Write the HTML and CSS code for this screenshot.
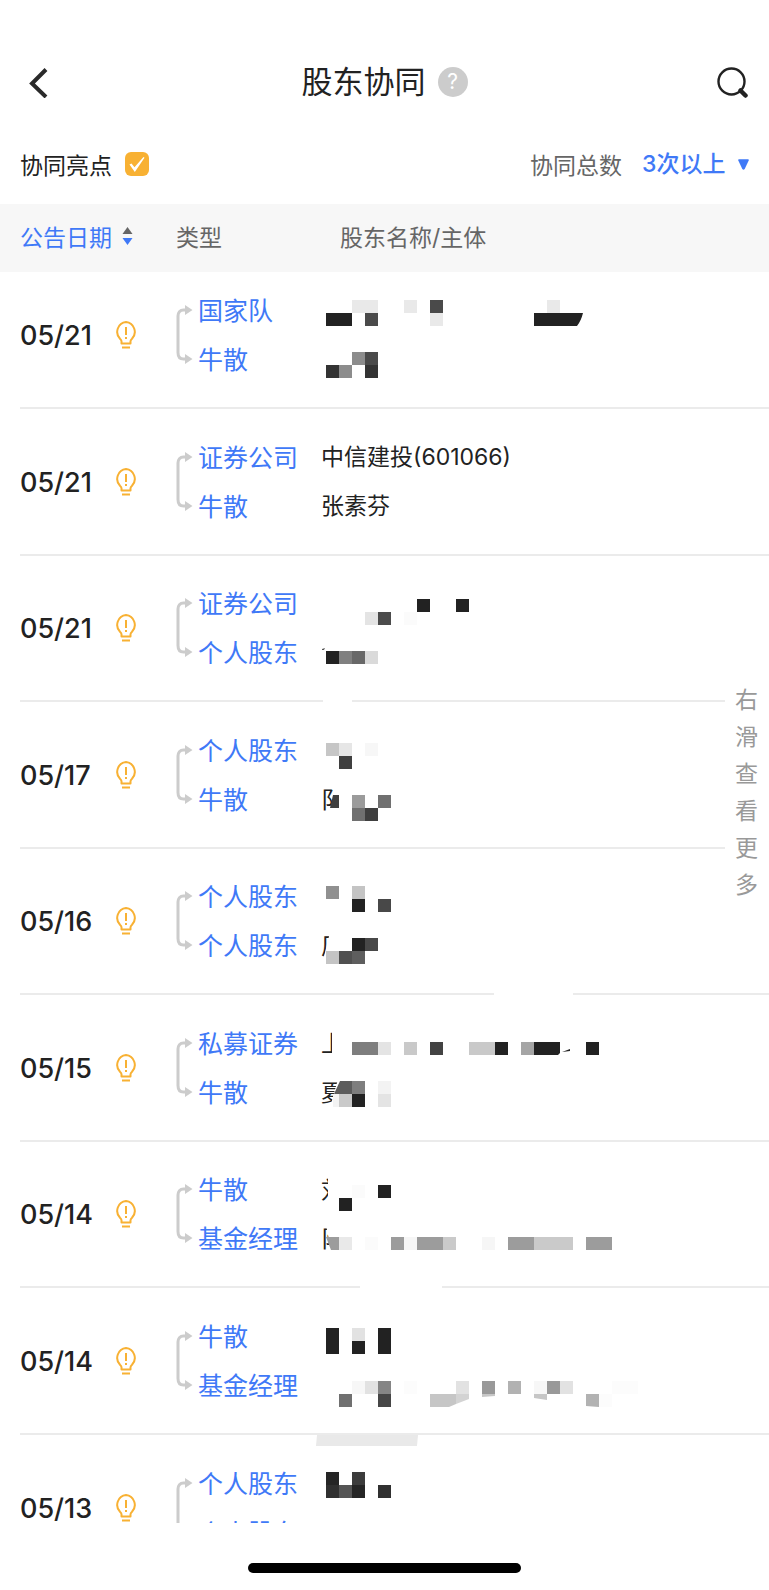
FILE: index.html
```html
<!DOCTYPE html>
<html lang="zh-CN">
<head>
<meta charset="utf-8">
<meta name="viewport" content="width=device-width, initial-scale=1">
<title>股东协同</title>
<link rel="stylesheet" href="styles.css">
</head>
<body>
<svg class="defs" width="0" height="0" aria-hidden="true">
  <symbol id="bulb" viewBox="0 0 22 28">
    <path d="M6.500 22.500v-2.200c0-1.200-.6-1.800-1.500-2.600A9.900 9.900 0 0 1 11 1a9.900 9.900 0 0 1 6 16.700c-.9.8-1.500 1.400-1.500 2.600v2.200z" fill="none" stroke="#f8b133" stroke-width="2" stroke-linejoin="round"/>
    <path d="M7 26.500h8M11 6v8M11 16v2" fill="none" stroke="#f8b133" stroke-width="2"/>
  </symbol>
  <symbol id="link" viewBox="0 0 17 60">
    <path d="M11 5H7.500C4 5 2 7.500 2 11v36.500c0 4 2 6.500 5.500 6.500H11" fill="none" stroke="#ccc" stroke-width="3"/>
    <path d="M9 0v10l7.500-5zM9 49v10l7.500-5z" fill="#ccc"/>
  </symbol>
</svg>

<header class="nav">
  <button class="icon-btn back" aria-label="返回">
    <svg width="20" height="32" viewBox="0 0 20 32"><path d="M18 3.500 4 17.500l14 13.500" fill="none" stroke="#2a2a2a" stroke-width="4"/></svg>
  </button>
  <div class="heading">
    <h1 class="title">股东协同</h1>
    <button class="help" aria-label="帮助">?</button>
  </div>
  <button class="icon-btn search" aria-label="搜索">
    <svg width="32" height="32" viewBox="0 0 32 32"><circle cx="14.500" cy="15.500" r="13" fill="none" stroke="#222" stroke-width="2.400"/><path d="m23.500 24.500 5 5" stroke="#222" stroke-width="4.500" stroke-linecap="round"/></svg>
  </button>
</header>

<section class="filters">
  <label class="highlight">协同亮点
    <span class="check">
      <input type="checkbox" class="check-input" checked>
      <svg class="check-mark" viewBox="0 0 24 24"><path d="m4.500 12.500 2-1 3 3.800L18.500 5l1 .8L9.800 20z" fill="#fff"/></svg>
    </span>
  </label>
  <div class="total">
    <label class="total-label" for="count">协同总数</label>
    <span class="picker">
      <select id="count" class="count"><option>3次以上</option></select>
      <svg width="11" height="11" viewBox="0 0 11 11"><path d="M1 .3h9q1.200 0 .7 1.200L6.700 10q-1.200 1.500-2.400 0L.3 1.500Q-.2.300 1 .3z" fill="#3f79f7"/></svg>
    </span>
  </div>
</section>

<main class="list">
<table class="table">
  <thead class="head">
    <tr class="head-row">
      <th class="th"><button class="sort">公告日期
        <svg width="11" height="20" viewBox="0 0 11 20"><path d="M.5 8 5.500 1l5 7z" fill="#666"/><path d="M.5 12h10l-5 7z" fill="#3f79f7"/></svg></button></th>
      <th class="th">类型</th>
      <th class="th th-name">股东名称/主体</th>
    </tr>
  </thead>
  <tbody class="body">
    <tr class="row">
      <td class="date">05/21<svg class="bulb"><use href="#bulb"/></svg></td>
      <td class="type"><svg class="link"><use href="#link"/></svg><span class="lines"><a href="#">国家队</a><a href="#">牛散</a></span></td>
      <td class="name"><svg class="mosaic" viewBox="0 0 320 98">
        <path fill="#e9e9e9" d="M31 14h26v13H31zM83 14h13v13H83zM109 27h13v13h-13zM226 14h13v13h-13z"/>
        <path fill="#4a4a4a" d="M109 14h13v13h-13zM44 27h13v13H44zM44 66h13v13H44z"/>
        <path fill="#222" d="M5 27h26v13H5zM213 27h49q-2 8-6 13h-43z"/>
        <path fill="#8c8c8c" d="M31 66h13v13H31zM18 79h13v13H18z"/>
        <path fill="#333" d="M5 79h13v13H5zM44 79h13v13H44z"/>
      </svg></td>
    </tr>
    <tr class="row">
      <td class="date">05/21<svg class="bulb"><use href="#bulb"/></svg></td>
      <td class="type"><svg class="link"><use href="#link"/></svg><span class="lines"><a href="#">证券公司</a><a href="#">牛散</a></span></td>
      <td class="name"><span class="lines"><span>中信建投(601066)</span><span>张素芬</span></span></td>
    </tr>
    <tr class="row">
      <td class="date">05/21<svg class="bulb"><use href="#bulb"/></svg></td>
      <td class="type"><svg class="link"><use href="#link"/></svg><span class="lines"><a href="#">证券公司</a><a href="#">个人股东</a></span></td>
      <td class="name"><svg class="mosaic" viewBox="0 0 320 98">
        <path fill="#222" d="M96 20h13v13H96zM135 20h13v13h-13zM5 72h13v13H5z"/>
        <path fill="#e4e4e4" d="M44 33h13v13H44z"/><path fill="#4b4b4b" d="M57 33h13v13H57z"/>
        <path fill="#fbfbfb" d="M83 33h13v13H83z"/>
        <path fill="#808080" d="M18 72h13v13H18z"/><path fill="#686868" d="M31 72h13v13H31z"/><path fill="#dadada" d="M44 72h13v13H44z"/>
        <path fill="#555" d="m1 70 3-1-1 2H1z"/>
        <path fill="#fff" d="M2 120h29v4H2z"/>
      </svg></td>
    </tr>
    <tr class="row">
      <td class="date">05/17<svg class="bulb"><use href="#bulb"/></svg></td>
      <td class="type"><svg class="link"><use href="#link"/></svg><span class="lines"><a href="#">个人股东</a><a href="#">牛散</a></span></td>
      <td class="name"><svg class="mosaic" viewBox="0 0 320 98">
        <text class="trace" x="0" y="82">阝</text>
        <path fill="#c6c6c6" d="M5 17h13v13H5z"/><path fill="#e6e6e6" d="M18 17h13v13H18z"/><path fill="#f7f7f7" d="M44 17h13v13H44z"/>
        <path fill="#3f3f3f" d="M18 30h13v13H18zM12 69h6v13H9zM44 82h13v13H44z"/>
        <path fill="#9b9b9b" d="M31 69h13v13H31z"/><path fill="#707070" d="M57 69h13v13H57zM31 82h13v13H31z"/>
      </svg></td>
    </tr>
    <tr class="row">
      <td class="date">05/16<svg class="bulb"><use href="#bulb"/></svg></td>
      <td class="type"><svg class="link"><use href="#link"/></svg><span class="lines"><a href="#">个人股东</a><a href="#">个人股东</a></span></td>
      <td class="name"><svg class="mosaic" viewBox="0 0 320 98">
        <text class="trace" x="0" y="82">厂</text><path fill="#fff" d="M9 60h18v25H3z"/>
        <path fill="#909090" d="M5 14h13v13H5z"/><path fill="#c4c4c4" d="M31 14h13v13H31zM5 79h13v13H5z"/>
        <path fill="#222" d="M31 27h13v13H31zM31 66h13v13H31z"/><path fill="#484848" d="M57 27h13v13H57zM44 66h13v13H44z"/>
        <path fill="#505050" d="M18 79h13v13H18z"/><path fill="#5e5e5e" d="M31 79h13v13H31z"/>
        <path fill="#fff" d="M173 120h79v4h-79z"/>
      </svg></td>
    </tr>
    <tr class="row">
      <td class="date">05/15<svg class="bulb"><use href="#bulb"/></svg></td>
      <td class="type"><svg class="link"><use href="#link"/></svg><span class="lines"><a href="#">私募证券</a><a href="#">牛散</a></span></td>
      <td class="name"><svg class="mosaic" viewBox="0 0 320 98">
        <text class="trace" x="0" y="33">上</text><path fill="#fff" d="M11 10h15v27H11z"/>
        <text class="trace" x="0" y="82">夏</text><path fill="#fff" d="M17 60h9v25H10z"/>
        <path fill="#7e7e7e" d="M31 23h26v13H31zM31 62h13v13H31z"/><path fill="#e4e4e4" d="M57 23h13v13H57zM57 75h13v13H57z"/>
        <path fill="#c9c9c9" d="M83 23h13v13H83zM148 23h26v13h-26zM18 75h13v13H18z"/><path fill="#434343" d="M109 23h13v13h-13z"/>
        <path fill="#222" d="M174 23h13v13h-13zM213 23h26v11l-2 2h-24zM265 23h13v13h-13zM31 75h13v13H31zM241 33l8-3v2l-8 1z"/>
        <path fill="#a5a5a5" d="M200 23h13v13h-13z"/><path fill="#5c5c5c" d="M19 62h12v13H13z"/>
        <path fill="#f3f3f3" d="M57 62h13v13H57zM12 75h6v13h-6z"/>
      </svg></td>
    </tr>
    <tr class="row">
      <td class="date">05/14<svg class="bulb"><use href="#bulb"/></svg></td>
      <td class="type"><svg class="link"><use href="#link"/></svg><span class="lines"><a href="#">牛散</a><a href="#">基金经理</a></span></td>
      <td class="name"><svg class="mosaic" viewBox="0 0 320 98">
        <text class="trace" x="0" y="33">刘</text><path fill="#fff" d="M7 10h19v27H7z"/>
        <text class="trace" x="0" y="82">阝</text><path fill="#fff" d="M5 60h19v25H10z"/>
        <path fill="#222" d="M57 20h13v13H57zM18 33h13v13H18z"/>
        <path fill="#9c9c9c" d="M5 72h13v13h-8zM122 72v13H96V72zM70 72h13v13H70zM187 72h26v13h-26zM265 72h26v13h-26z"/>
        <path fill="#e9e9e9" d="M18 72h13v13H18z"/><path fill="#f6f6f6" d="M83 72h13v13H83zM161 72h13v13h-13z"/>
        <path fill="#fbfbfb" d="M31 20h13v13H31zM44 72h13v13H44z"/><path fill="#cacaca" d="M122 72h13v13h-13zM213 72h39v13h-39z"/>
        <path fill="#fff" d="M39 120h82v4H39z"/>
      </svg></td>
    </tr>
    <tr class="row">
      <td class="date">05/14<svg class="bulb"><use href="#bulb"/></svg></td>
      <td class="type"><svg class="link"><use href="#link"/></svg><span class="lines"><a href="#">牛散</a><a href="#">基金经理</a></span></td>
      <td class="name"><svg class="mosaic" viewBox="0 0 320 98">
        <path fill="#222" d="M5 16h13v26H5zM57 16h13v26H57zM31 29h13v13H31z"/>
        <path fill="#e2e2e2" d="M31 16h13v13H31zM44 69h13v13H44zM135 69h13v13h-13zM239 69h13v13h-13z"/>
        <path fill="#f7f7f7" d="M31 69h13v13H31zM213 69h13v13h-13z"/><path fill="#fcfcfc" d="M83 69h13v13H83zM291 69h26v13h-26zM278 82h13v13h-13z"/>
        <path fill="#858585" d="M57 69h13v13H57z"/><path fill="#707070" d="M18 82h13v13H18z"/><path fill="#464646" d="M57 82h13v13H57z"/>
        <path fill="#999" d="M161 69h13v13h-13zM226 69h13v13h-13z"/><path fill="#b2b2b2" d="M187 69h13v13h-13zM265 82h13v13l-13-1z"/>
        <path fill="#c6c6c6" d="M109 82h26v10l-7 3h-19zM161 82h13v2l-13 1zM213 82h13v6l-13-2z"/><path fill="#d3d3d3" d="M135 82h13v5l-13 5z"/>
      </svg></td>
    </tr>
    <tr class="row">
      <td class="date">05/13<svg class="bulb"><use href="#bulb"/></svg></td>
      <td class="type"><svg class="link"><use href="#link"/></svg><span class="lines"><a href="#">个人股东</a><a href="#">个人股东</a></span></td>
      <td class="name"><svg class="mosaic" viewBox="0 0 320 98">
        <path fill="#e9e9e9" d="M-4-24H97l-1 11H-5z"/>
        <path fill="#252525" d="M5 13h13v13H5zM31 26h13v13H31z"/><path fill="#3c3c3c" d="M31 13h13v13H31z"/>
        <path fill="#303030" d="M5 26h13v13H5zM57 26h13v13H57z"/><path fill="#555" d="M18 26h13v13H18z"/>
      </svg></td>
    </tr>
  </tbody>
</table>
<aside class="hint">右滑查看更多</aside>
</main>

<footer class="home"><span class="home-bar"></span></footer>
</body>
</html>
```

FILE: styles.css
```css
* {
  box-sizing: border-box;
}

body {
  display: flex;
  flex-direction: column;
  height: 100vh;
  margin: 0;
  background: #fff;
  color: #222;
  font-family: Inter, "Noto Sans CJK SC", sans-serif;
  font-size: 23px;
}

button,
select {
  padding: 0;
  border: 0;
  background: none;
  color: inherit;
  font: inherit;
}

svg {
  display: block;
  flex: none;
}

.defs {
  position: absolute;
}

.nav {
  display: grid;
  grid-template-columns: 1fr auto 1fr;
  align-items: center;
  height: 124px;
  padding: 40px 20px 0;
}

.back {
  justify-self: start;
  padding-left: 8px;
}

.search {
  justify-self: end;
}

.heading {
  display: flex;
  align-items: center;
  gap: 12px;
}

.title {
  margin: 0;
  font-size: 31px;
  font-weight: 400;
  line-height: 40px;
}

.help {
  width: 30px;
  height: 30px;
  border-radius: 50%;
  background: #ccc;
  color: #fff;
  font-size: 21px;
  line-height: 30px;
}

.filters {
  display: flex;
  flex: none;
  align-items: center;
  justify-content: space-between;
  height: 80px;
  padding: 0 20px;
}

.highlight,
.total,
.picker,
.sort {
  display: flex;
  align-items: center;
}

.highlight {
  gap: 13px;
}

.picker {
  gap: 12px;
}

.check {
  display: grid;
}

.check-input,
.check-mark {
  grid-area: 1 / 1;
  width: 24px;
  height: 24px;
  margin: 0;
}

.check-input {
  appearance: none;
  border-radius: 6px;
  background: #f8b133;
}

.check-mark {
  z-index: 1;
  pointer-events: none;
}

.total {
  gap: 20px;
}

.total-label {
  color: #666;
}

.count {
  appearance: none;
  color: #3f79f7;
  font-weight: 500;
}

.list {
  position: relative;
  flex: 1;
  min-height: 0;
  overflow: hidden;
}

.table,
.head,
.body {
  display: block;
}

.head-row,
.row {
  display: grid;
  grid-template-columns: 156px 145px 1fr;
}

.head-row {
  align-items: center;
  height: 68px;
  padding: 0 0 5px 20px;
  background: #f7f7f7;
}

.th {
  padding: 0;
  color: #666;
  font-weight: 400;
  text-align: left;
}

.th-name {
  padding-left: 19px;
}

.sort {
  gap: 10px;
  color: #3f79f7;
}

.row {
  margin-left: 20px;
  padding: 24px 0 23px;
  border-bottom: 2px solid #ebebeb;
}

.row:nth-child(odd) {
  padding-top: 23px;
}

.row:first-child {
  padding-top: 14px;
}

.row:last-child {
  padding-top: 24px;
}

.date,
.type,
.name {
  display: flex;
  align-items: center;
  height: 98px;
  padding: 0;
}

.date {
  display: grid;
  grid-template-columns: 73px 22px;
  gap: 22px;
  font-size: 27px;
  font-weight: 500;
}

.bulb {
  width: 22px;
  height: 28px;
}

.type {
  gap: 5px;
  color: #3f79f7;
  font-size: 25px;
}

.type a {
  color: inherit;
  text-decoration: none;
}

.link {
  width: 17px;
  height: 60px;
}

.lines {
  display: flex;
  flex-direction: column;
  line-height: 49px;
  white-space: nowrap;
}

.type .lines {
  padding-top: 2px;
}

.mosaic {
  width: 320px;
  height: 98px;
  overflow: visible;
}

.trace {
  fill: #222;
  font-size: 23px;
}

.hint {
  position: absolute;
  top: 478px;
  right: 0;
  width: 44px;
  padding: 0 11px 0 10px;
  background: #fff;
  color: #999;
  line-height: 37px;
}

.home {
  display: flex;
  flex: none;
  justify-content: center;
  height: 67px;
  padding-top: 40px;
}

.home-bar {
  width: 273px;
  height: 10px;
  border-radius: 5px;
  background: #000;
}
```
